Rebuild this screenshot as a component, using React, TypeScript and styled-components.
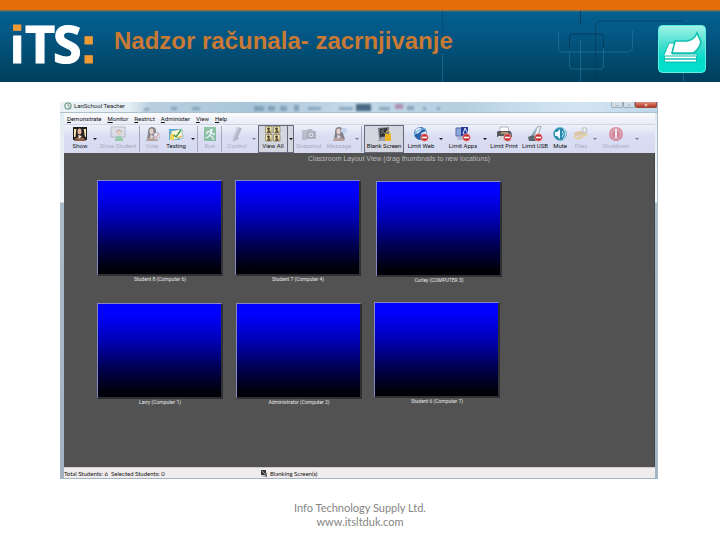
import React from "react";
import styled, { createGlobalStyle } from "styled-components";

const GlobalStyle = createGlobalStyle`
  * { box-sizing: border-box; }
  body { margin: 0; background: #fff; font-family: Roboto, "Open Sans", sans-serif; }
`;

const Page = styled.div`
  min-height: 100vh;
  display: flex;
  flex-direction: column;
`;

const Header = styled.header`
  position: relative;
  display: flex;
  align-items: center;
  height: 82px;
  padding: 0 13px 0 10px;
  border-top: 10px solid #e66c09;
  background: linear-gradient(#76715b 0 1px, #04608f 2px, #045784 24px, #004463 62px, #003f5d);
`;

const Circuit = styled.svg`
  position: absolute;
  inset: 0;
  width: 100%;
  height: 100%;
  fill: none;
`;

const Logo = styled.svg`
  position: relative;
  flex: none;
  width: 90px;
  height: 72px;
  overflow: visible;
`;

const Title = styled.h1`
  position: relative;
  flex: 1;
  margin: 0 0 10px 14px;
  font: bold 24px/28px "Liberation Sans", Arial, sans-serif;
  color: #c87a35;
  white-space: nowrap;
`;

const Badge = styled.svg`
  position: relative;
  flex: none;
  width: 50px;
  height: 50px;
  margin-top: 5px;
`;

const Main = styled.main`
  padding: 20px 62px 0 60px;
`;

const Window = styled.section`
  padding: 0 2px 1px 4px;
  background: linear-gradient(#dfeaf2 0, #f3f8fb 100px, #a9bbc9 101px, #a2b4c3);
  border-right: 1px solid #a9bbc8;
`;

const TitleBar = styled.div`
  display: flex;
  align-items: flex-start;
  height: 11px;
  margin: 0 -2px 0 -4px;
  padding-left: 4px;
  background: linear-gradient(90deg, #eaf1f6 0, #e3edf4 70px, #b9cfdf 90px, #a9c5d9 190px, #c5d9e8 290px, #b4cee0 400px, #c4dbeb 450px, #d3e5f2 520px, #bdd6e8);
  border-bottom: 1px solid #aebfcd;
`;

const TitleIcon = styled.svg`
  width: 8px;
  height: 8px;
  margin: 0 2px 0 0;
`;

const TitleText = styled.span`
  font-size: 6px;
  line-height: 8px;
  color: #222;
  white-space: nowrap;
`;

const Reflections = styled.svg`
  flex: 1;
  min-width: 0;
  height: 10px;
`;

const WinButton = styled.button<{ $close?: boolean }>`
  width: ${(p) => (p.$close ? 22 : 12)}px;
  height: 6px;
  padding: 0;
  border: 1px solid ${(p) => (p.$close ? "#9b4a3f" : "#9aaab6")};
  border-top: 0;
  border-radius: 0 0 2px 2px;
  background: ${(p) => (p.$close ? "linear-gradient(#dd9285, #b93421)" : "#d0dde7")};
  color: ${(p) => (p.$close ? "#fff" : "#777")};
  font-size: 6px;
  line-height: 4px;
`;

const MenuBar = styled.nav`
  display: flex;
  gap: 6px;
  height: 11px;
  padding-left: 3px;
  background: linear-gradient(#fafbfd, #e9ecf6);
`;

const MenuItem = styled.button`
  padding: 0;
  border: 0;
  background: none;
  font: 6px/10px Roboto, sans-serif;
  color: #111;

  &::first-letter { text-decoration: underline; }
`;

const Toolbar = styled.div`
  display: flex;
  height: 29px;
  padding: 0 0 0 4px;
  border-top: 1px solid #d2d5e6;
  background: linear-gradient(#eef0fa, #dadef3 40%, #d6daf1);
  overflow: hidden;
`;

const Tool = styled.button<{ $w: number; $dim?: boolean; $pressed?: boolean }>`
  flex: none;
  display: flex;
  flex-direction: column;
  align-items: center;
  width: ${(p) => p.$w}px;
  padding: 0;
  border: 1px solid ${(p) => (p.$pressed ? "#666a78" : "transparent")};
  background: ${(p) => (p.$pressed ? "#d3d5e0" : "none")};
  font: 6px/8px Roboto, sans-serif;
  color: ${(p) => (p.$dim ? "#a9adc0" : "#111")};
  white-space: nowrap;

  svg { flex: none; width: 16px; height: 16px; opacity: ${(p) => (p.$dim ? 0.5 : 1)}; }
`;

const Arrow = styled.button<{ $w: number; $pressed?: boolean; $dim?: boolean }>`
  flex: none;
  display: grid;
  place-items: center;
  width: ${(p) => p.$w}px;
  padding: 0;
  border: ${(p) => (p.$pressed ? "1px solid #666a78" : "0")};
  border-left: 0;
  background: ${(p) => (p.$pressed ? "#d3d5e0" : "none")};

  &::after {
    content: "";
    border: 2px solid transparent;
    border-top-color: ${(p) => (p.$dim ? "#777b8c" : "#111")};
    border-bottom: 0;
  }
`;

const Divider = styled.span`
  flex: none;
  width: 1px;
  margin: 1px 2px 1px 1px;
  background: #a5a9bd;
`;

const Classroom = styled.div`
  position: relative;
  height: 314px;
  background: #525252;
  border-right: 1px solid #444;
  overflow: hidden;
`;

const Hint = styled.p`
  margin: 0;
  padding: 0 0 0 80px;
  text-align: center;
  font: 7px/11px "Liberation Sans", Arial, sans-serif;
  color: #b9b9b9;
`;

const Student = styled.figure<{ $x: number; $y: number }>`
  position: absolute;
  left: ${(p) => p.$x}px;
  top: ${(p) => p.$y}px;
  width: 126px;
  margin: 0;
`;

const Screen = styled.div`
  height: 96px;
  border: 1px solid #8586c4;
  border-right: 2px solid #303034;
  border-bottom: 2px solid #303034;
  background: linear-gradient(#0000ff 10%, #0000b4 40%, #000054 68%, #000008 95%);
`;

const Caption = styled.figcaption`
  text-align: center;
  font: 5px/7px Roboto, sans-serif;
  color: #e6e6e6;
`;

const StatusBar = styled.div`
  display: grid;
  grid-template-columns: 1fr 2fr;
  align-items: center;
  height: 11px;
  border-top: 1px solid #cfcccd;
  background: #f0eced;
  font: 6px/9px Lato, sans-serif;
  color: #111;
`;

const Status = styled.span`
  display: flex;
  align-items: center;
  gap: 3px;
  white-space: pre;

  svg { width: 6px; height: 7px; }
`;

const Footer = styled.footer`
  padding-top: 22px;
  text-align: center;
  font: 11px/14px Lato, Carlito, sans-serif;
  color: #858585;

  p { margin: 0; }
  a { color: inherit; text-decoration: none; }
`;

const Woman = () => (
  <>
    <path d="M3 13Q4 9 4 6q0-5 4-5t4 4q0 4 2 8l-3 1H5z" fill="#29201f" />
    <ellipse cx="7.500" cy="5.500" rx="2" ry="3" fill="#e5b99a" />
    <path d="M2 15q1-4 5-4l5 1 2 3z" fill="#8f6048" />
    <path d="M6 9l1 4 3-3" fill="#f1e4d8" />
  </>
);

const NoSign = () => (
  <>
    <circle cx="11.500" cy="11.500" r="3.800" fill="#c92e32" stroke="#f2c3c4" strokeWidth=".6" />
    <path d="M9 11.500h5" stroke="#fff" strokeWidth="1.600" />
  </>
);

const icons: Record<string, React.ReactNode> = {
  show: (
    <>
      <path d="M1 1h14v13H1z" fill="#1d1d1d" />
      <path d="M2 3h12v8H2z" fill="#f1e6b2" />
      <Woman />
    </>
  ),
  student: (
    <>
      <path d="M1 1h14v10H1z" fill="#d6d9dc" stroke="#8c9095" />
      <circle cx="9" cy="7" r="2.400" fill="#e2bd8d" />
      <path d="M5 15q0-5 4-5t4 5z" fill="#4fbb63" />
      <path d="M6 6q3-4 6 0" stroke="#775a3c" fill="none" />
    </>
  ),
  vote: (
    <>
      <Woman />
      <path d="M10 7h5v6h-5z" fill="#eee" stroke="#888" strokeWidth=".6" />
      <path d="M10 10l2 2 3-5" stroke="#c44" fill="none" />
    </>
  ),
  testing: (
    <>
      <path d="M1 3h12l-1 11H1z" fill="#58aadb" />
      <path d="M3 5l11-2 1 9-11 2z" fill="#fff8d8" stroke="#6aa" strokeWidth=".6" />
      <path d="M2 8h4v6H2z" fill="#eed35a" />
      <path d="M6 9l2 2 5-7" stroke="#3a9c45" strokeWidth="1.400" fill="none" />
      <path d="M9 12l5-2" stroke="#e09c31" />
    </>
  ),
  run: (
    <>
      <path d="M2 1h12v14H2z" fill="#35a052" />
      <circle cx="9.500" cy="4" r="1.300" fill="#fff" />
      <path d="M4 8l2-2.500h3l-1 4 3 2v2.500M8 9l-2 2-3 1M9 6l1.500 2H13" stroke="#fff" strokeWidth="1.300" fill="none" />
    </>
  ),
  control: (
    <>
      <path d="M8 1l5 1-5 11-4 1z" fill="#868a95" />
      <path d="M8 1l2 1-5 11-2 1z" fill="#b7bac6" />
      <path d="M4 14l1 1 5-3" stroke="#777" fill="none" />
    </>
  ),
  viewAll: (
    <>
      {[0, 8].map((x) =>
        [0, 8].map((y) => (
          <g key={`${x}-${y}`} transform={`translate(${x} ${y})`}>
            <path d="M.5.5h6.500v6.500H.5z" fill="#efe6b0" stroke="#857c50" strokeWidth=".7" />
            <circle cx="3.500" cy="2.800" r="1.300" fill="#3a3226" />
            <path d="M2 7q0-3 2-3t1.500 3z" fill="#6b5a3a" />
          </g>
        ))
      )}
    </>
  ),
  snapshot: (
    <>
      <path d="M1 4h5v10H1z" fill="#999da8" />
      <path d="M5 6l2-3h4l1 2h3v8H5z" fill="#858993" />
      <circle cx="10" cy="9" r="3" fill="#d8dce5" stroke="#666" />
      <circle cx="10" cy="9" r="1" fill="#555" />
    </>
  ),
  message: (
    <>
      <Woman />
      <path d="M10 3q5-3 6 1 0 3-2 3l-2 2v-2q-3-1-2-4z" fill="#a6bde6" />
    </>
  ),
  blank: (
    <>
      <path d="M2 2l11-1v10L3 12z" fill="#70747a" />
      <path d="M4 3l7-1v8l-7 1z" fill="#30353a" />
      <path d="M5 4l5 5M5 8l3-5" stroke="#7a8084" />
      <path d="M3 12h7v3H2z" fill="#9c9fa6" />
      <path d="M9 8h6v7H9z" fill="#e9b422" />
      <path d="M10 8V6q2-3 4 0v2" stroke="#d6b75d" fill="none" />
    </>
  ),
  web: (
    <>
      <circle cx="7.500" cy="7.500" r="6.500" fill="#285fa5" />
      <path d="M3 3q4-3 6 0L7 6 4 8 2 6zM8 7l5-2 1 4-4 2z" fill="#d6e8f4" />
      <path d="M1 9q5-7 12-6" stroke="#7dbee9" fill="none" strokeWidth="1.400" />
      <NoSign />
    </>
  ),
  apps: (
    <>
      <path d="M1 2h9v8H1z" fill="#8ba8dc" stroke="#596b9f" />
      <path d="M6 1h7v9H6z" fill="#293c9c" />
      <path d="M8 8l2-6 3 6" stroke="#dce4ff" fill="none" />
      <path d="M2 11h8v3H3z" fill="#aeb8d5" />
      <NoSign />
    </>
  ),
  print: (
    <>
      <path d="M4 1h8l1 5H4z" fill="#fff" stroke="#888" strokeWidth=".6" />
      <path d="M1 6q0-1 2-1h11q2 1 2 6H1z" fill="#54585c" />
      <path d="M2 10h10v4H2z" fill="#d5d7da" />
      <path d="M5 7h7" stroke="#d8b07c" strokeWidth="1.400" />
      <NoSign />
    </>
  ),
  usb: (
    <>
      <path d="M10 1l4-1-3 10-4 1z" fill="#e9edf0" stroke="#859099" strokeWidth=".7" />
      <path d="M9 2L3 11l4 1z" fill="#8aa9be" />
      <path d="M1 11q5-3 10 0l-2 4H2z" fill="#5d656d" />
      <NoSign />
    </>
  ),
  mute: (
    <>
      <circle cx="8" cy="8" r="6.500" fill="#2589ac" stroke="#79bbd0" />
      <path d="M3 6h2l3-3v10L5 10H3z" fill="#f1faff" />
      <path d="M10 5q3 3 0 6M11.500 3q4 5 0 10" stroke="#d9f4ff" fill="none" />
    </>
  ),
  files: (
    <>
      <path d="M1 7l5-2 8 1-3 3-9 1z" fill="#d7aa52" />
      <path d="M1 10l4 1 9-4 1 2-9 5-5-2z" fill="#e9c166" />
      <circle cx="11.500" cy="4" r="3" fill="#9db5a0" />
      <path d="M11.500 2v4m-2-2h4" stroke="#fff" />
    </>
  ),
  shutdown: (
    <>
      <circle cx="8" cy="8" r="7" fill="#c73340" />
      <circle cx="8" cy="8" r="5" fill="none" stroke="#e99098" />
      <path d="M8 3v9" stroke="#fff" strokeWidth="1.800" />
    </>
  ),
};

type Entry = {
  label: string;
  icon: string;
  w: number;
  dim?: boolean;
  pressed?: boolean;
  arrow?: number;
  divider?: boolean;
};

const tools: Entry[] = [
  { label: "Show", icon: "show", w: 24, arrow: 6 },
  { label: "Show Student", icon: "student", w: 40, dim: true, divider: true },
  { label: "Vote", icon: "vote", w: 20, dim: true },
  { label: "Testing", icon: "testing", w: 28, arrow: 6, divider: true },
  { label: "Run", icon: "run", w: 20, dim: true, divider: true },
  { label: "Control", icon: "control", w: 26, dim: true, arrow: 8 },
  { label: "View All", icon: "viewAll", w: 30, pressed: true, arrow: 6 },
  { label: "Snapshot", icon: "snapshot", w: 30, dim: true },
  { label: "Message", icon: "message", w: 30, dim: true, arrow: 6, divider: true },
  { label: "Blank Screen", icon: "blank", w: 40, pressed: true },
  { label: "Limit Web", icon: "web", w: 34, arrow: 6 },
  { label: "Limit Apps", icon: "apps", w: 38, arrow: 6 },
  { label: "Limit Print", icon: "print", w: 32 },
  { label: "Limit USB", icon: "usb", w: 30 },
  { label: "Mute", icon: "mute", w: 20 },
  { label: "Files", icon: "files", w: 22, dim: true, arrow: 6 },
  { label: "Shutdown", icon: "shutdown", w: 36, dim: true, arrow: 6 },
];

const students = [
  { name: "Student 8 (Computer 6)", x: 33, y: 27 },
  { name: "Student 7 (Computer 4)", x: 171, y: 27 },
  { name: "Curley (COMPUTER 3)", x: 312, y: 28 },
  { name: "Larry (Computer 1)", x: 33, y: 150 },
  { name: "Administrator (Computer 2)", x: 172, y: 150 },
  { name: "Student 6 (Computer 7)", x: 310, y: 149 },
];

export default function App() {
  return (
    <Page>
      <GlobalStyle />
      <Header>
        <Circuit aria-hidden="true">
          <g stroke="#2b7ca6" strokeOpacity=".55">
            <path d="M558.500 22v16q0 4 4 4h65q5 0 5-5V20" />
            <path d="M569.500 42v14q0 3 3 3h28q3 0 3-3V38" />
            <path d="M580.500 30v42M442.500 44v28M683.500 62v10" />
          </g>
          <g stroke="#03344f" strokeOpacity=".75">
            <path d="M569.500 38V27q0-3 3-3h28q3 0 3 3v11" />
            <path d="M595.500 70V16q0-5 5-5h82" strokeOpacity=".5" />
            <path d="M580.500 1v14" />
          </g>
          <path d="M442.500 1v30" stroke="#034e78" />
        </Circuit>
        <Logo viewBox="0 0 90 72" role="img" aria-label="iTS:">
          <defs>
            <linearGradient id="dot" gradientUnits="userSpaceOnUse" x1="0" y1="0" x2="0" y2="72">
              <stop offset=".34" stopColor="#f09a36" />
              <stop offset=".34" stopColor="#fff" />
            </linearGradient>
          </defs>
          <g fontWeight="bold" fontSize="52">
            <text x="0" y="53" fontFamily="Liberation Sans" fill="url(#dot)" stroke="url(#dot)">i</text>
            <text x="15" y="53" fontFamily="Open Sans" fill="#fff" stroke="#fff">T</text>
            <text x="43" y="53" fontFamily="Open Sans" fill="#fff" stroke="#fff">S</text>
            <text x="70" y="53" fontFamily="Liberation Sans" fill="#f09a36" stroke="#f09a36">:</text>
          </g>
        </Logo>
        <Title>Nadzor računala- zacrnjivanje</Title>
        <Badge viewBox="0 0 50 50" role="img" aria-label="Documents">
          <defs>
            <linearGradient id="mint" x2="0" y2="1">
              <stop stopColor="#a1f2e6" />
              <stop offset=".42" stopColor="#45dfcf" />
              <stop offset=".7" stopColor="#04dbca" />
              <stop offset="1" stopColor="#03e0cf" />
            </linearGradient>
          </defs>
          <rect x="1.500" y="1.500" width="47" height="47" rx="4" fill="url(#mint)" stroke="#5af0e2" />
          <g fill="#fff" stroke="#0fbfae" strokeWidth="1">
            <path d="M7 31l5-12h6l-3 11h25v3H7z" />
            <path d="M15 29l3-12h12q7-1 10-8l4 9q-2 8-8 11z" strokeWidth="1.600" />
            <path d="M7.500 32h32v3h-32zM7.500 35h32v3h-32z" />
          </g>
        </Badge>
      </Header>

      <Main>
        <Window aria-label="LanSchool Teacher">
          <TitleBar>
            <TitleIcon viewBox="0 0 8 8" aria-hidden="true">
              <rect x="1" y="1" width="6" height="6" rx="2" fill="#edf5f1" stroke="#54877a" />
              <path d="M3 3h2v3" stroke="#7ca895" fill="none" />
            </TitleIcon>
            <TitleText>LanSchool Teacher</TitleText>
            <Reflections aria-hidden="true">
              <defs>
                <filter id="soft"><feGaussianBlur stdDeviation="1" /></filter>
              </defs>
              <g filter="url(#soft)" fill="#6e91ab" opacity=".7">
                <path d="M19 6h5v3h-5zM46 5h6v3h-6zM67 5h8v3h-8zM129 4h10v5h-10zM143 4h7v5h-7zM155 4h7v5h-7zM169 3h5v6h-5zM183 5h13v3h-13zM214 5h14v3h-14z" />
                <path d="M231 2h15v7h-15z" fill="#173c5d" />
                <path d="M254 5h11v3h-11z" />
                <path d="M270 2h8v5h-8z" fill="#a8729b" />
                <path d="M282 4h7v4h-7zM298 5h3v3h-3zM312 5h3v3h-3z" />
              </g>
            </Reflections>
            <WinButton aria-label="Minimize">–</WinButton>
            <WinButton aria-label="Maximize">▫</WinButton>
            <WinButton aria-label="Close" $close>×</WinButton>
          </TitleBar>
          <MenuBar>
            {["Demonstrate", "Monitor", "Restrict", "Administer", "View", "Help"].map((m) => (
              <MenuItem key={m}>{m}</MenuItem>
            ))}
          </MenuBar>
          <Toolbar role="toolbar">
            {tools.map((t) => (
              <React.Fragment key={t.label}>
                <Tool $w={t.w} $dim={t.dim} $pressed={t.pressed}>
                  <svg viewBox="0 0 16 16" aria-hidden="true">{icons[t.icon]}</svg>
                  {t.label}
                </Tool>
                {t.arrow && <Arrow $w={t.arrow} $dim={t.dim} $pressed={t.pressed} aria-label={`${t.label} options`} />}
                {t.divider && <Divider />}
              </React.Fragment>
            ))}
          </Toolbar>
          <Classroom>
            <Hint>Classroom Layout View (drag thumbnails to new locations)</Hint>
            {students.map((s) => (
              <Student key={s.name} $x={s.x} $y={s.y}>
                <Screen />
                <Caption>{s.name}</Caption>
              </Student>
            ))}
          </Classroom>
          <StatusBar>
            <Status>Total Students: 6  Selected Students: 0</Status>
            <Status>
              <svg viewBox="0 0 6 7" aria-hidden="true">
                <path d="M0 0h5v5H0z" fill="#34383c" />
                <path d="M1 1l3 3M1 6h4" stroke="#a0a4a8" />
                <path d="M4 3h2v4H4z" fill="#77736a" />
              </svg>
              Blanking Screen(s)
            </Status>
          </StatusBar>
        </Window>
      </Main>

      <Footer>
        <p>Info Technology Supply Ltd.</p>
        <p><a href="http://www.itsltduk.com">www.itsltduk.com</a></p>
      </Footer>
    </Page>
  );
}
